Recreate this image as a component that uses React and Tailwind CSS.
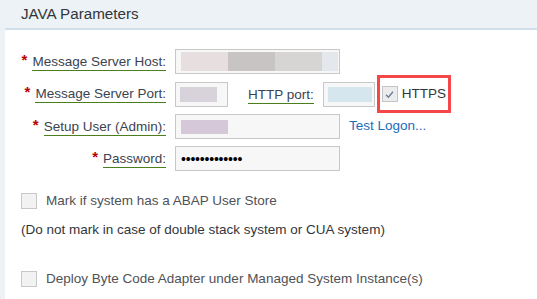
export default function App() {
  const font = { fontFamily: '"Liberation Sans", Arial, sans-serif' };

  const Label = ({ text, required = true }) => (
    <div className="flex items-center justify-end whitespace-nowrap">
      {required && (
        <span className="text-[#bb0000] text-[15px] font-bold mr-[5px] -mt-[3px]">*</span>
      )}
      <span className="inline-block leading-[17px] border-b border-[#4b7f1c] text-[13.5px] text-[#3b4350]">
        {text}
      </span>
    </div>
  );

  const Input = ({ w, children }) => (
    <div
      className={`h-[25px] ${w} border border-[#c8c8c8] bg-[#f7f7f7] flex items-center pl-[5px] shrink-0`}
    >
      {children}
    </div>
  );

  return (
    <div style={font} className="w-[537px] h-[299px] bg-white overflow-hidden flex flex-col">
      {/* Header */}
      <div className="h-[28px] bg-[#edf2f7] flex items-center pl-[21px] shrink-0">
        <span className="text-[15.2px] text-[#32363a] pt-[1px]">JAVA Parameters</span>
      </div>

      <div className="flex flex-1">
        <div className="w-[5px] bg-[#edf2f7]" />
        <div className="flex-1 border-t-2 border-[#d1dfeb] pt-[19px] pl-[16px]">
          {/* Form */}
          <div className="grid grid-cols-[145px_auto] gap-x-[9px] gap-y-[7px]">
            <Label text="Message Server Host:" />
            <Input w="w-[165px]">
              <div className="flex h-[19px]">
                <div className="w-[47px] bg-[#e7dfdf]" />
                <div className="w-[47px] bg-[#c8c4c4]" />
                <div className="w-[47px] bg-[#d6d5d3]" />
                <div className="w-[16px] bg-[#e4e7eb]" />
              </div>
            </Input>

            <Label text="Message Server Port:" />
            <div className="flex items-center">
              <Input w="w-[53px]">
                <div className="w-[37px] h-[15px] bg-[#d8d3da] -ml-[1px]" />
              </Input>
              <div className="ml-[20px] mr-[9px] whitespace-nowrap">
                <span className="inline-block leading-[17px] border-b border-[#4b7f1c] text-[13.5px] text-[#3b4350]">
                  HTTP port:
                </span>
              </div>
              <Input w="w-[52px]">
                <div className="w-[44px] h-[15px] bg-[#d6e6ee] -ml-[1px]" />
              </Input>
              <div className="ml-[2px] -my-[6px] h-[38px] border-[3px] border-[#f44848] flex items-center pl-[2px] pr-[2px]">
                <div className="w-[16px] h-[16px] border border-[#c4c4c4] bg-[#ececec] flex items-center justify-center">
                  <svg width="11" height="11" viewBox="0 0 11 11">
                    <path d="M2 5.8 L4.4 8.2 L9 2.8" fill="none" stroke="#6b7f99" strokeWidth="1.4" />
                  </svg>
                </div>
                <span className="ml-[4px] text-[13.5px] text-[#32363a]">HTTPS</span>
              </div>
            </div>

            <Label text="Setup User (Admin):" />
            <div className="flex items-center">
              <Input w="w-[165px]">
                <div className="w-[47px] h-[14px] bg-[#d5c8d9]" />
              </Input>
              <span className="ml-[9px] text-[13.5px] text-[#1a6dbb] whitespace-nowrap">Test Logon...</span>
            </div>

            <Label text="Password:" />
            <Input w="w-[165px]">
              <span className="text-[14px] text-black tracking-[-0.2px] leading-none">
                •••••••••••••
              </span>
            </Input>
          </div>

          {/* Options */}
          <div className="mt-[20px] h-[20px] flex items-center">
            <div className="w-[16px] h-[16px] border border-[#c8c8c8] bg-[#f2f2f2]" />
            <span className="ml-[9px] text-[13.5px] text-[#4f5257]">
              Mark if system has a ABAP User Store
            </span>
          </div>
          <div className="mt-[9px] h-[20px] leading-[20px] text-[13.5px] text-[#32363a]">
            (Do not mark in case of double stack system or CUA system)
          </div>
          <div className="mt-[29px] h-[20px] flex items-center">
            <div className="w-[16px] h-[16px] border border-[#c8c8c8] bg-[#f2f2f2]" />
            <span className="ml-[9px] text-[13.5px] text-[#4f5257]">
              Deploy Byte Code Adapter under Managed System Instance(s)
            </span>
          </div>
        </div>
      </div>
    </div>
  );
}
